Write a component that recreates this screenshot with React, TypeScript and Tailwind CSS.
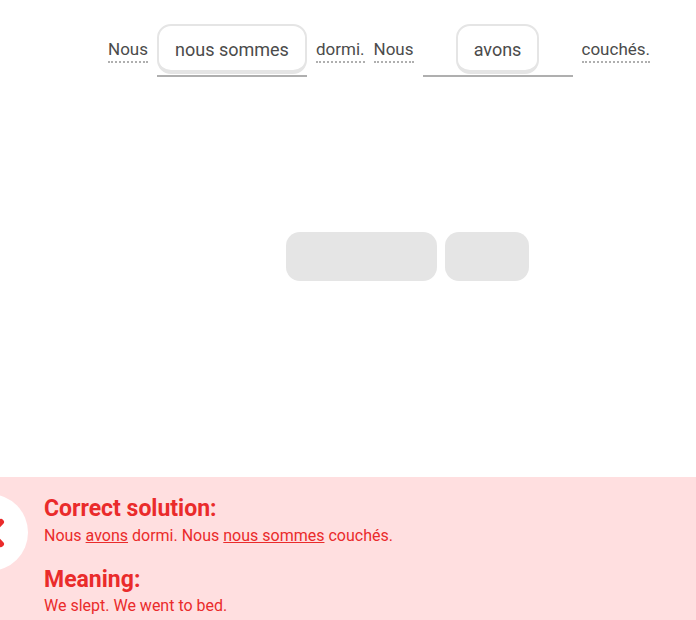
import { Fragment } from "react";

type Part = { word: string } | { blank: string; fill: boolean };

const sentence: Part[] = [
  { word: "Nous" },
  { blank: "nous sommes", fill: true },
  { word: "dormi." },
  { word: "Nous" },
  { blank: "avons", fill: false },
  { word: "couchés." },
];

function Chip({ label, full }: { label: string; full: boolean }) {
  return (
    <div
      className={`h-[50px] pt-[2px] flex items-center justify-center rounded-[14px] border-2 border-b-4 border-[#e5e5e5] bg-white text-[18px] text-[#4b4b4b] ${
        full ? "w-full" : "px-[16px]"
      }`}
    >
      {label}
    </div>
  );
}

export default function App() {
  return (
    <div
      className="w-[696px] h-[620px] bg-white flex flex-col overflow-hidden"
      style={{ fontFamily: "Roboto, 'Open Sans', sans-serif" }}
    >
      {/* Sentence with blanks */}
      <div className="flex items-start gap-[9px] pl-[108px] pt-[24px]">
        {sentence.map((p, i) =>
          "word" in p ? (
            <span
              key={i}
              className="mt-[13px] text-[17px] leading-6 text-[#4b4b4b] border-b-2 border-dotted border-[#afafaf]"
            >
              {p.word}
            </span>
          ) : (
            <div
              key={i}
              className="w-[150px] flex flex-col items-center gap-[1px]"
            >
              <Chip label={p.blank} full={p.fill} />
              <div className="w-full h-[2px] bg-[#afafaf]" />
            </div>
          )
        )}
      </div>

      {/* Word bank (empty slots) */}
      <div className="flex gap-[8px] pl-[286px] mt-[155px]">
        <div className="w-[151px] h-[49px] rounded-[14px] bg-[#e5e5e5]" />
        <div className="w-[84px] h-[49px] rounded-[14px] bg-[#e5e5e5]" />
      </div>

      {/* Feedback panel */}
      <div className="relative mt-auto h-[143px] bg-[#ffdfe0] pl-[44px] pt-[18px] text-[#ea2b2b]">
        <div className="absolute left-[-49px] top-[17px] w-[77px] h-[77px] rounded-full bg-white flex items-center justify-center">
          <svg width="30" height="30" viewBox="0 0 30 30">
            <path
              d="M4 4 L26 26 M26 4 L4 26"
              stroke="#ea2b2b"
              strokeWidth="6"
              strokeLinecap="round"
            />
          </svg>
        </div>
        <div className="text-[23px] font-bold leading-7">Correct solution:</div>
        <div className="text-[16px] leading-5 mt-[3px]">
          {["Nous ", "avons", " dormi. Nous ", "nous sommes", " couchés."].map(
            (t, i) => (
              <Fragment key={i}>
                {i % 2 === 1 ? <span className="underline">{t}</span> : t}
              </Fragment>
            )
          )}
        </div>
        <div className="text-[23px] font-bold leading-7 mt-[20px]">Meaning:</div>
        <div className="text-[16px] leading-5 mt-[2px]">We slept. We went to bed.</div>
      </div>
    </div>
  );
}
